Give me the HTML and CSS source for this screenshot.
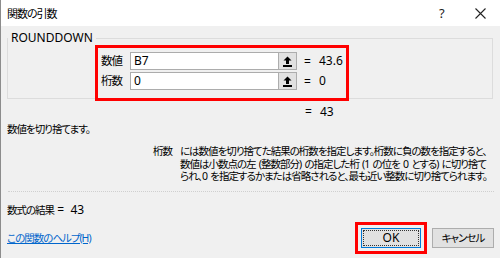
FILE: index.html
```html
<!DOCTYPE html>
<html lang="ja">
<head>
  <meta charset="UTF-8" />
  <title>関数の引数</title>
  <link rel="stylesheet" href="styles.css">
</head>
<body>

  <div class="dialog">
    <div class="titlebar">
      <span class="title">関数の引数</span>
      <span class="help">?</span>
      <span class="close">
        <svg width="11" height="11" viewBox="0 0 11 11"><path d="M0.5 0.5L10.5 10.5M10.5 0.5L0.5 10.5" stroke="#222" stroke-width="1.1"/></svg>
      </span>
    </div>

    <div class="body">
      <fieldset class="group">
        <legend>ROUNDDOWN</legend>
        <div class="args">
          <div class="arg-row">
            <span class="arg-label">数値</span>
            <div class="arg-input">B7</div>
            <button class="ref-btn">
              <svg width="9" height="11" viewBox="0 0 9 11"><path d="M4.5 0.5L8.5 4.5H6V8H3V4.5H0.5Z" fill="#000"/><rect x="0" y="9" width="9" height="2" fill="#000"/></svg>
            </button>
            <span class="eq">=</span>
            <span class="val">43.6</span>
          </div>
          <div class="arg-row">
            <span class="arg-label">桁数</span>
            <div class="arg-input">0</div>
            <button class="ref-btn">
              <svg width="9" height="11" viewBox="0 0 9 11"><path d="M4.5 0.5L8.5 4.5H6V8H3V4.5H0.5Z" fill="#000"/><rect x="0" y="9" width="9" height="2" fill="#000"/></svg>
            </button>
            <span class="eq">=</span>
            <span class="val">0</span>
          </div>
        </div>
      </fieldset>

      <div class="result-row"><span class="eq">=</span><span class="val">43</span></div>

      <p class="summary">数値を切り捨てます。</p>

      <div class="desc">
        <span class="desc-name">桁数</span>
        <p class="desc-text">
          <span>には数値を切り捨てた結果の桁数を指定します。桁数に負の数を指定すると、</span>
          <span>数値は小数点の左 (整数部分) の指定した桁 (1 の位を 0 とする) に切り捨て</span>
          <span>られ、0 を指定するかまたは省略されると、最も近い整数に切り捨てられます。</span>
        </p>
      </div>

      <div class="separator"></div>

      <div class="footer">
        <div class="footer-left">
          <div class="formula">数式の結果 <span class="num">=&nbsp;&nbsp;43</span></div>
          <a class="help-link" href="#">この関数のヘルプ(H)</a>
        </div>
        <div class="buttons">
          <div class="ok-frame">
            <button class="btn default"><span>OK</span></button>
          </div>
          <button class="btn cancel">キャンセル</button>
        </div>
      </div>
    </div>
  </div>

</body>
</html>
```

FILE: styles.css
```css
body {
  margin: 0;
  width: 500px;
  height: 258px;
  overflow: hidden;
  font-family: "Noto Sans", "Noto Sans CJK JP", sans-serif;
  font-size: 10.5px;
  letter-spacing: -1px;
  word-spacing: 1.5px;
  font-feature-settings: "palt";
  color: #000;
  background: #f0f0f0;
}

.dialog {
  width: 500px;
  height: 258px;
  border-left: 1px solid #8c8c8c;
  box-sizing: border-box;
  display: flex;
  flex-direction: column;
  overflow: hidden;
}

.titlebar {
  height: 26px;
  flex-shrink: 0;
  background: white;
  display: flex;
  align-items: center;
  padding-left: 6px;
}

.title {
  flex: 1;
  font-size: 11px;
  line-height: 14px;
  padding-top: 1px;
}

.help {
  font-size: 13px;
  letter-spacing: 0;
  width: 12px;
  margin-right: 24px;
  color: #222;
}

.close {
  display: flex;
  margin-right: 14px;
}

.body {
  flex: 1;
  min-width: 0;
  background: #f0f0f0;
  padding: 0 6px 0 5px;
}

.group {
  margin: 5px 0 0 1px;
  padding: 0;
  width: 486px;
  box-sizing: border-box;
  border: 1px solid #dcdcdc;
  min-width: 0;
}

.group legend {
  padding: 0 3px;
  margin-left: 0;
  line-height: 14px;
  font-size: 12px;
  letter-spacing: 0;
}

.args {
  margin: 0 0 -3px 87px;
  width: 254px;
  height: 56px;
  box-sizing: border-box;
  border: 3px solid #f00;
  padding: 4px 0 0 3px;
  display: flex;
  flex-direction: column;
  gap: 2px;
  position: relative;
}

.arg-row {
  display: flex;
  align-items: center;
  height: 18px;
}

.arg-label {
  width: 29px;
  flex-shrink: 0;
  font-size: 11.5px;
  line-height: 14px;
}

.arg-input {
  width: 148px;
  height: 18px;
  box-sizing: border-box;
  background: white;
  border: 1px solid #acacac;
  border-right: none;
  padding: 0 3px;
  line-height: 16px;
  font-size: 12px;
  letter-spacing: 0;
}

.ref-btn {
  width: 19px;
  height: 18px;
  padding: 0;
  margin: 0;
  background: #e1e1e1;
  border: 1px solid #adadad;
  display: flex;
  align-items: center;
  justify-content: center;
}

.eq,
.val,
.num {
  font-size: 12px;
  letter-spacing: 0;
  word-spacing: 0;
}

.eq {
  margin-left: 7px;
  width: 15px;
}

.val {
  line-height: 14px;
}

.result-row {
  display: flex;
  margin: 6px 0 0 299px;
  line-height: 14px;
}

.result-row .eq {
  margin-left: 0;
}

.summary {
  margin: 3px 0 0 1px;
  line-height: 14px;
}

.desc {
  display: flex;
  margin: 9px 0 0 147px;
}

.desc-name {
  width: 27px;
  flex-shrink: 0;
  line-height: 12.5px;
}

.desc-text {
  margin: 0;
  line-height: 12.5px;
}

.desc-text span {
  display: block;
  white-space: nowrap;
}

.separator {
  margin: 8px 0 0 2px;
  width: 486px;
  border-top: 1px dotted #cfcfcf;
}

.footer {
  display: flex;
  justify-content: space-between;
  margin-top: 11px;
}

.footer-left {
  display: flex;
  flex-direction: column;
  padding-left: 1px;
}

.formula {
  line-height: 14px;
}

.help-link {
  margin-top: 14px;
  color: #0066cc;
  line-height: 14px;
}

.buttons {
  display: flex;
  align-items: center;
  gap: 5px;
  margin-top: 19px;
  height: 32px;
}

.ok-frame {
  border: 3px solid #f00;
  padding: 3px 3px;
  display: flex;
}

.btn {
  height: 20px;
  padding: 0;
  margin: 0;
  font-family: inherit;
  font-size: 10.5px;
  letter-spacing: -1px;
  font-feature-settings: "palt";
  background: #e1e1e1;
  border: 1px solid #adadad;
  color: #000;
}

.btn.default {
  width: 60px;
  border-color: #0078d7;
  padding: 1px;
  font-size: 12px;
  letter-spacing: 0;
}

.btn.default span {
  display: block;
  height: 100%;
  border: 1px dotted #333;
  box-sizing: border-box;
  line-height: 14px;
}

.btn.cancel {
  width: 62px;
}
```
